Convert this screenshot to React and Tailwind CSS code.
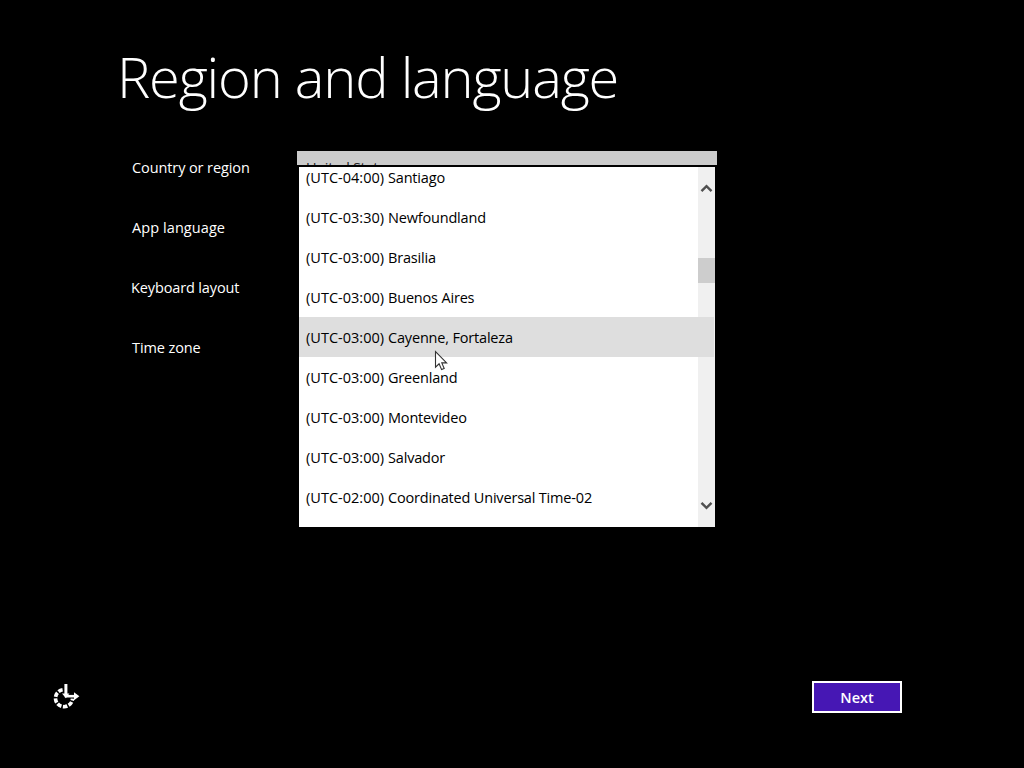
import clsx from 'clsx'

const labels = [
  { text: 'Country or region', spacing: 'tracking-[-0.1px]' },
  { text: 'App language', spacing: 'tracking-[0.08px]' },
  { text: 'Keyboard layout', spacing: '-ml-px tracking-[-0.13px]' },
  { text: 'Time zone', spacing: 'tracking-[-0.1px]' },
]

const zones = [
  { offset: '(UTC-04:00)', name: 'Santiago' },
  { offset: '(UTC-03:30)', name: 'Newfoundland' },
  { offset: '(UTC-03:00)', name: 'Brasilia' },
  { offset: '(UTC-03:00)', name: 'Buenos Aires' },
  { offset: '(UTC-03:00)', name: 'Cayenne, Fortaleza', active: true },
  { offset: '(UTC-03:00)', name: 'Greenland' },
  { offset: '(UTC-03:00)', name: 'Montevideo' },
  { offset: '(UTC-03:00)', name: 'Salvador' },
  { offset: '(UTC-02:00)', name: 'Coordinated Universal Time-02' },
]

function ScrollBar() {
  return (
    <div className="flex w-[17px] flex-col items-center bg-[#f0f0f0] pt-[17px] pb-[17px]">
      <svg width="13" height="9" viewBox="0 0 13 9" fill="none" stroke="#505050" strokeWidth="2.4">
        <path d="M1.5 7.2 6.5 2.2 11.5 7.2" />
      </svg>
      <div className="mt-[65px] h-[25px] w-full bg-[#cdcdcd]" />
      <svg className="mt-auto" width="13" height="9" viewBox="0 0 13 9" fill="none" stroke="#505050" strokeWidth="2.4">
        <path d="M1.5 1.8 6.5 6.8 11.5 1.8" />
      </svg>
    </div>
  )
}

function ZoneList() {
  return (
    <div className="absolute top-[14px] left-0 flex h-[364px] w-[420px] overflow-hidden border-2 border-black bg-white">
      <ul className="relative z-10 -mt-[10px] flex-1">
        {zones.map((zone) => (
          <li
            key={zone.name}
            className={clsx(
              'flex h-10 items-center pl-[7px] pt-[2px] text-black',
              zone.active && '-mr-4 bg-[#dedede]'
            )}
          >
            <span className="w-[82px] whitespace-nowrap tracking-[0.02px]">{zone.offset}</span>
            <span className="whitespace-nowrap tracking-[-0.18px]">{zone.name}</span>
          </li>
        ))}
      </ul>
      <ScrollBar />
    </div>
  )
}

function EaseOfAccess() {
  return (
    <svg width="28" height="28" viewBox="0 0 28 28" fill="none" stroke="#fff">
      <path d="M10.6 6.8A8.5 8.5 0 1 0 20.5 15.6" strokeWidth="3.6" strokeDasharray="4.5 1.5" />
      <path d="M13.9 1V13" strokeWidth="3" />
      <path d="M12.8 13.2H23" strokeWidth="2.6" />
      <path d="M22 9.2 27.4 13.2 22 17.2Z" fill="#fff" stroke="none" />
      <path d="M10 10.4 13.9 15.2 17.4 10.4Z" fill="#fff" stroke="none" />
    </svg>
  )
}

function Cursor() {
  return (
    <svg className="absolute top-[350px] left-[434px] z-20" width="14" height="22" viewBox="0 0 14 22">
      <path
        d="M1.5 1.5V17.2L5.1 13.8 7.6 19.6 10.2 18.5 7.8 12.9H12.6Z"
        fill="#fff"
        stroke="#333"
        strokeWidth="1.1"
      />
    </svg>
  )
}

export default function App() {
  return (
    <main className="relative flex h-[768px] w-[1024px] flex-col overflow-hidden bg-black font-['Open_Sans','Noto_Sans',sans-serif] text-[14.5px] text-white">
      <h1 className="mt-[36px] ml-[117px] h-[80px] text-[56px] leading-[80px] font-light whitespace-nowrap tracking-[-1.2px]">
        Region and language
      </h1>

      <div className="mt-[35px] flex pl-[132px]">
        <div className="-mt-[13px] w-[165px]">
          {labels.map((label) => (
            <div key={label.text} className={clsx('flex h-[60px] items-center', label.spacing)}>
              {label.text}
            </div>
          ))}
        </div>
        <div className="relative w-[420px]">
          <div className="flex h-8 items-center bg-[#cbcbcb] pt-px pl-[9px] tracking-[-0.3px] text-[#222]">
            United States
          </div>
          <ZoneList />
        </div>
      </div>

      <footer className="mt-auto mb-[55px] flex items-center justify-between pr-[122px] pl-[52px]">
        <EaseOfAccess />
        <button className="h-8 w-[90px] border-2 border-white bg-[#4617b4] pt-px text-[14.5px] leading-[27px] font-semibold">
          Next
        </button>
      </footer>

      <Cursor />
    </main>
  )
}
